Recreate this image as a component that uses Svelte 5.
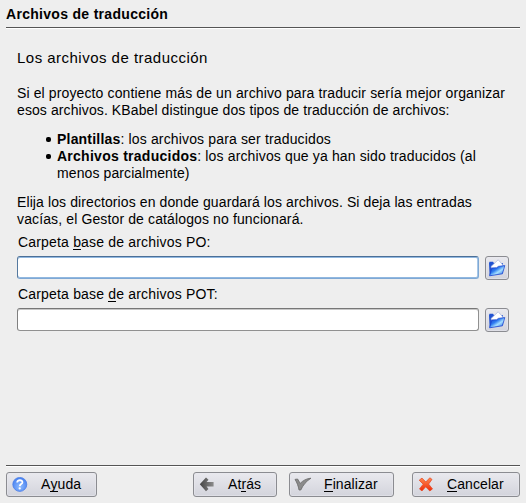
<script>
  const fields = [
    { id: 'po', before: 'Carpeta ', key: 'b', after: 'ase de archivos PO:', focused: true },
    { id: 'pot', before: 'Carpeta base ', key: 'd', after: 'e archivos POT:', focused: false },
  ];
</script>

<svg class="defs" width="0" height="0" aria-hidden="true">
  <defs>
    <linearGradient id="folder" x1="0" y1="0" x2="1" y2="1">
      <stop offset="0" stop-color="#1238c8" />
      <stop offset="0.4" stop-color="#2f7cf0" />
      <stop offset="0.6" stop-color="#a5e0ff" />
      <stop offset="1" stop-color="#1450dc" />
    </linearGradient>
    <radialGradient id="help" cx="0.5" cy="0.65" r="0.6">
      <stop offset="0" stop-color="#8fbcff" />
      <stop offset="1" stop-color="#4a83f0" />
    </radialGradient>
    <linearGradient id="grey" x1="0" y1="0" x2="1" y2="0">
      <stop offset="0" stop-color="#444" />
      <stop offset="1" stop-color="#8c8c8c" />
    </linearGradient>
    <linearGradient id="red" x1="0" y1="0" x2="0" y2="1">
      <stop offset="0" stop-color="#ff8a50" />
      <stop offset="1" stop-color="#ee2b08" />
    </linearGradient>
  </defs>
</svg>

<main>
  <h1>Archivos de traducción</h1>
  <div class="rule"></div>

  <section>
    <h2>Los archivos de traducción</h2>
    <p class="intro">
      <span class="l1">Si el proyecto contiene más de un archivo para traducir sería mejor organizar</span><br />
      <span class="l2">esos archivos. KBabel distingue dos tipos de traducción de archivos:</span>
    </p>
    <ul>
      <li><b class="b1">Plantillas</b><span class="l3">: los archivos para ser traducidos</span></li>
      <li>
        <b class="b2">Archivos traducidos</b><span class="l4">: los archivos que ya han sido traducidos (al</span><br />
        <span class="l5">menos parcialmente)</span>
      </li>
    </ul>
    <p class="outro">
      <span class="l6">Elija los directorios en donde guardará los archivos. Si deja las entradas</span><br />
      <span class="l7">vacías, el Gestor de catálogos no funcionará.</span>
    </p>

    {#each fields as f}
      <label for={f.id}>{f.before}<u>{f.key}</u>{f.after}</label>
      <div class="row">
        <input id={f.id} type="text" class:focused={f.focused} />
        <button class="browse" aria-label="Abrir">
          <svg width="18" height="18" viewBox="0 0 18 18">
            <path d="M1 4.2 L1.5 2.8 L5 2.8 L6 4.2 L15 4.2 L15 14 L1.6 16.4 Z" fill="#2152d2" />
            <path d="M3 7.6 L10.2 0.8 L15 6.2 L14 10 L4 10.5 Z" fill="#fff" stroke="#a9b4dc" stroke-width="0.7" />
            <path d="M3.8 9 L8.6 8.8 L10.4 7.4 L16.8 6.6 L14.4 14.8 L1.6 16.8 Z" fill="url(#folder)" stroke="#1a45d2" stroke-width="0.8" />
          </svg>
        </button>
      </div>
    {/each}
  </section>

  <footer>
    <div class="rule"></div>
    <nav>
      <button class="help">
        <svg width="16" height="16" viewBox="0 0 16 16">
          <circle cx="7.8" cy="7.4" r="7" fill="url(#help)" stroke="#4a7de8" stroke-width="0.8" />
          <path d="M5.2 5.6 C5.2 2.4 10.6 2.6 10.4 5.4 C10.2 7.2 7.9 7 7.8 9.1" fill="none" stroke="#fff" stroke-width="1.8" />
          <circle cx="7.7" cy="11.4" r="1.15" fill="#fff" />
        </svg>
        <span>A<u>y</u>uda</span>
      </button>
      <button class="back">
        <svg width="16" height="16" viewBox="0 0 16 16">
          <path d="M0.8 7.3 L7 0.6 L9.5 2.8 L7.6 5.1 L14.6 5.1 L14.6 9.5 L7.6 9.5 L9.5 12 L7 14.2 Z" fill="url(#grey)" />
        </svg>
        <span>At<u>r</u>ás</span>
      </button>
      <button class="finish">
        <svg width="18" height="16" viewBox="0 0 18 16">
          <path d="M1 2.4 L3.6 2 L6.2 6.4 C9 3.5 12.5 1.5 17 1.2 C12.5 4 9 8 6.8 13 L5 13 C4.3 9 3 5.5 1 2.4 Z" fill="#8b8b8b" stroke="#686868" stroke-width="0.8" />
        </svg>
        <span><u>F</u>inalizar</span>
      </button>
      <button class="cancel">
        <svg width="16" height="16" viewBox="0 0 16 16">
          <path d="M1.2 3.2 L4 1.1 L7.8 5 L11.8 0.8 L14 2.4 L10.6 7.1 L14.5 11.9 L11.8 14 L7.7 9.8 L4 13.9 L1.5 12 L5.2 7.2 Z" fill="url(#red)" stroke="#e8401c" stroke-width="0.7" />
        </svg>
        <span><u>C</u>ancelar</span>
      </button>
    </nav>
  </footer>
</main>

<style>
  :global(body) { background: #eee; }
  .defs { position: absolute; }
  main {
    box-sizing: border-box;
    width: 526px;
    height: 503px;
    padding: 0 6px 6px;
    display: flex;
    flex-direction: column;
    background: #eee;
    color: #000;
    font: 14px/17px "Liberation Sans", Arial, sans-serif;
    white-space: nowrap;
    overflow: hidden;
  }
  h1 { margin: 6px 0 4px; font-size: 14px; line-height: 17px; letter-spacing: 0.3px; }
  .rule { height: 1px; background: #555; border-bottom: 1px solid #fff; }
  section { padding: 20px 11px 0; }
  h2 { margin: 0 0 18px; font-size: 15px; line-height: 18px; font-weight: 400; letter-spacing: 0.48px; }
  p { margin: 0; }
  .l1 { letter-spacing: 0.122px; }
  .l2 { letter-spacing: 0.1px; }
  .b1 { letter-spacing: 0.2px; }
  .l3 { letter-spacing: 0.15px; }
  .b2 { letter-spacing: 0.26px; }
  .l4 { letter-spacing: 0.14px; }
  .l5 { letter-spacing: 0.1px; }
  .l6 { letter-spacing: 0.1px; }
  .l7 { letter-spacing: 0.125px; }
  ul { margin: 12px 0; padding: 0 0 0 40px; list-style: none; }
  li { position: relative; }
  li::before {
    content: "";
    position: absolute;
    left: -11px;
    top: 6px;
    width: 5px;
    height: 5px;
    border-radius: 2px;
    background: #000;
  }
  label { display: block; margin: 6px 0 5px 1px; letter-spacing: 0.18px; }
  .row { display: flex; gap: 6px; height: 24px; align-items: flex-start; }
  .row + label { margin-top: 6px; }
  u { text-decoration: none; border-bottom: 1px solid #000; display: inline-block; line-height: 14px; }
  input {
    box-sizing: border-box;
    width: 462px;
    height: 23px;
    padding: 0 4px;
    border: 1px solid #909090;
    border-color: #777 #909090 #909090 #808080;
    border-radius: 3px;
    outline: none;
    background: #fff;
    font: inherit;
    box-shadow: inset 0 1px 0 #c8c8c8;
  }
  input.focused {
    border-color: #4b6f97 #7fa8d4 #7fa8d4 #55799f;
    box-shadow: inset 0 1px 0 #91b8e0, inset 0 -1px 0 #91b8e0, inset -1px 0 0 #a8c8e8;
  }
  button {
    box-sizing: border-box;
    height: 25px;
    padding: 0;
    display: flex;
    align-items: center;
    border: 1px solid #8b8c91;
    border-radius: 3px;
    background: linear-gradient(#e9e9ee, #d3d4dc);
    box-shadow: inset 0 0 0 1px #e8e8ee88;
    color: #000;
    font: inherit;
  }
  svg { flex: none; }
  .browse { width: 24px; height: 24px; justify-content: center; }
  footer { margin-top: auto; }
  nav { display: flex; padding-top: 5px; }
  nav button { letter-spacing: 0.08px; }
  .help { width: 91px; padding-left: 5px; gap: 13px; margin-right: 96px; }
  .back { width: 84px; padding-left: 5px; gap: 13px; margin-right: 12px; }
  .finish { width: 105px; padding-left: 4px; gap: 12px; margin-right: 18px; }
  .cancel { width: 108px; padding-left: 5px; gap: 13px; }
</style>
